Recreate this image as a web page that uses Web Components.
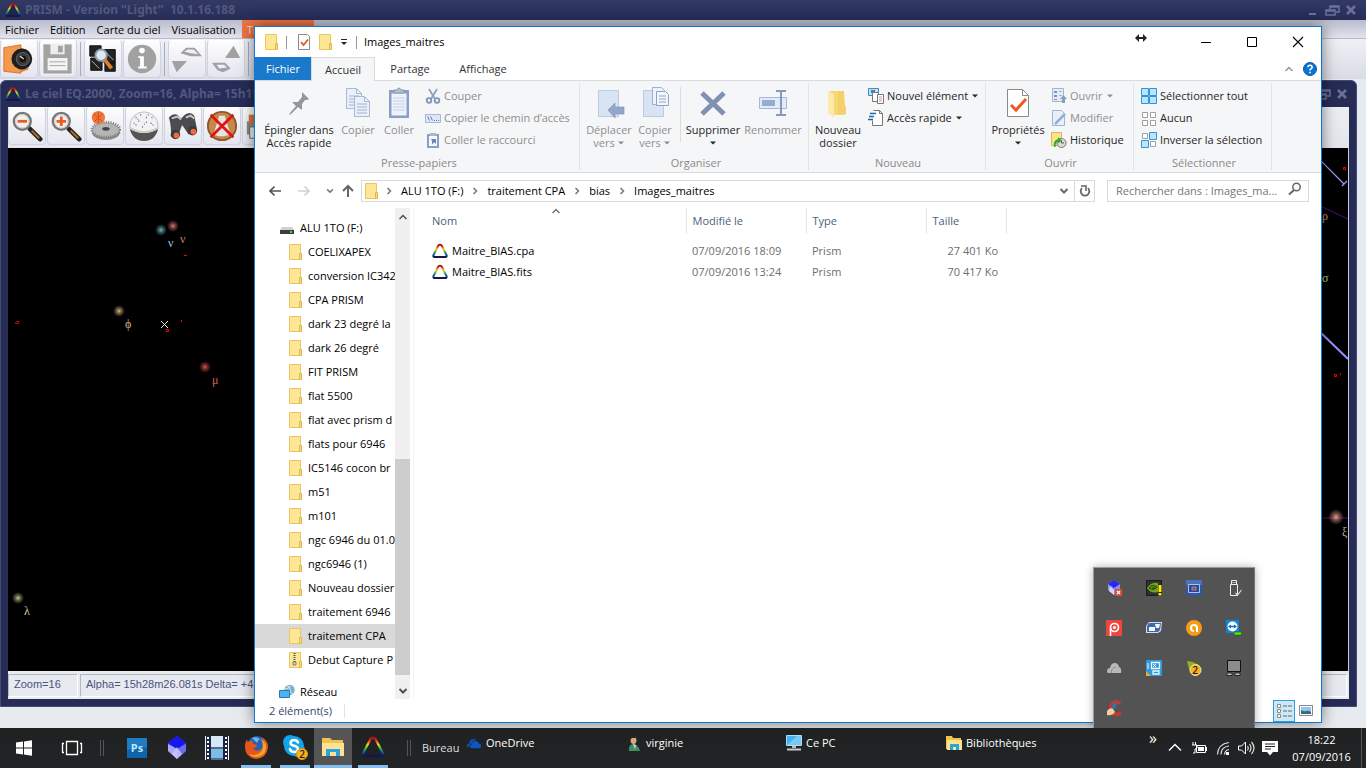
<!DOCTYPE html>
<html lang="fr">
<head>
<meta charset="utf-8">
<title>Images_maitres</title>
<style>
  html, body { margin: 0; height: 100%; }
  body { font: 11px/16px "Open Sans", "Noto Sans", sans-serif; color: #000; overflow: hidden; }
</style>
</head>
<body>
<win-desktop>
  <prism-app slot="back"></prism-app>
  <explorer-window slot="window"></explorer-window>
  <tray-popup slot="popup"></tray-popup>
  <task-bar slot="bar"></task-bar>
</win-desktop>

<script>
const lens = sign => `<path d="M20 20l11 11" stroke="#222" stroke-width="5" stroke-linecap="round"/><path d="M22 22l8 8" stroke="#b5701e" stroke-width="2"/><circle cx="12" cy="12" r="9" fill="#e9eaec" stroke="#777" stroke-width="2.5"/><circle cx="12" cy="12" r="7" fill="#f1f1f4" stroke="#ccc"/><path d="${sign}" stroke="#f05a1a" stroke-width="3"/>`;
const folderBody = `<path d="M1.500.500h11v15h-11z" fill="#fde696" stroke="#e9c75c"/><path d="M11.500 9.500h2v6h-2z" fill="#fbdc7c" stroke="#e0b945"/>`;
const prism = (hollow, w) => `<defs><linearGradient id="p" x1="0" y1="0" x2="0" y2="1"><stop offset="0" stop-color="#8c1c1c"/><stop offset=".15" stop-color="#e0301c"/><stop offset=".38" stop-color="#f2d21c"/><stop offset=".6" stop-color="#25b545"/><stop offset=".8" stop-color="#1d4fb0"/><stop offset="1" stop-color="#15153f"/></linearGradient></defs><path d="M6.500 2.300q1.500-1 3 0l5 9.700q.6 2-1.200 2h-10.600q-1.800 0-1.200-2z" fill="${hollow}" stroke="url(#p)" stroke-width="${w}" stroke-linejoin="round"/><path d="M2.500 14h11" stroke="#16164a" stroke-width="${w}" stroke-linecap="round"/>`;
const sq = (x, y, on) => `<path d="M${x}.5 ${y}.5h5v5h-5z" fill="${on ? '#bfe3fb' : '#fff'}" stroke="${on ? '#2e94e0' : '#a0a0a0'}" stroke-width="${on ? 1.5 : 1}"/>`;
const tile = (x, y) => `<path d="M${x}.5 ${y}.5h7v7h-7z" fill="#bfe3fb" stroke="#2e94e0"/>`;
const sheet = (x, y) => `<path d="M${x}.5 ${y}.5h10l5 5v15h-15z" fill="#eaf0f9" stroke="#a9b9d3"/><path d="M${x + 10}.5 ${y}.5v5h5" fill="none" stroke="#a9b9d3"/><path d="M${x + 3} ${y + 8}h10m-10 3h10m-10 3h10m-10 3h10" stroke="#9fb2d2"/>`;
const glyph = {
  folder: [16, 16, folderBody],
  zip: [16, 16, folderBody + `<path d="M6.500 1v10" stroke="#555" stroke-width="2" stroke-dasharray="1 1"/><path d="M5 10h3v3H5z" fill="#ddd" stroke="#666" stroke-width=".8"/>`],
  prismLight: [16, 16, prism('#fff', 2)],
  prismDark: [16, 16, prism('#1f2550', 1.8)],
  prismBar: [16, 16, prism('#1f2122', 1.6)],
  drive: [16, 16, `<path d="M3 7h10l2 3H1z" fill="#cfcfcf"/><path d="M1 10h14v4H1z" fill="#3d3d3d"/><path d="M11 12h2" stroke="#3cdc50" stroke-width="2"/>`],
  network: [16, 16, `<circle cx="10.500" cy="6" r="5.200" fill="#7eb0cc"/><path d="M8 2q4 1 3 4t3 4M6 5q4 0 5-3" stroke="#d8ecf4" fill="none"/><path d="M.5 6.500h10v7H.5z" fill="#4db3ee" stroke="#2a78b4"/><path d="M3 15.500h6" stroke="#7c8a94"/>`],
  props: [16, 16, `<path d="M2.500.5h9l2 2v13h-11z" fill="#fff" stroke="#8b8b8b"/><path d="M5 8l2.500 3L12 5.500" fill="none" stroke="#e2581e" stroke-width="1.800"/>`],
  qatArrow: [8, 8, `<path d="M1 1.500h6" stroke="#222"/><path d="M1 4h6L4 7z" fill="#222"/>`],
  caret: [8, 8, `<path d="M1 2.500h6l-3 3z" fill="currentColor"/>`],
  resize: [12, 8, `<path d="M2 4h8" stroke="#222" stroke-width="2"/><path d="M4 0v8L0 4zM8 0v8l4-4z" fill="#222"/>`],
  min: [16, 16, `<path d="M3 8.500h10" stroke="#000"/>`],
  max: [16, 16, `<path d="M3.500 3.500h9v9h-9z" fill="none" stroke="#000"/>`],
  close: [16, 16, `<path d="M3 3l10 10M13 3L3 13" stroke="#000" stroke-width="1.100"/>`],
  chevUp: [10, 10, `<path d="M1.500 7L5 3.500 8.500 7" fill="none" stroke="currentColor" stroke-width="1.500"/>`],
  chevDown: [10, 10, `<path d="M1.500 3L5 6.500 8.500 3" fill="none" stroke="currentColor" stroke-width="2"/>`],
  chevRight: [8, 8, `<path d="M2.500 1l3 3-3 3" fill="none" stroke="#777" stroke-width="1.500"/>`],
  back: [14, 14, `<path d="M13 7H2M6.500 2.500L2 7l4.500 4.500" fill="none" stroke="#555" stroke-width="1.700"/>`],
  fwd: [14, 14, `<path d="M1 7h11M7.500 2.500L12 7l-4.500 4.500" fill="none" stroke="#d2d2d2" stroke-width="1.700"/>`],
  up: [14, 14, `<path d="M7 13V2M2 7l5-5 5 5" fill="none" stroke="#666" stroke-width="2"/>`],
  refresh: [14, 14, `<path d="M4 4.200A4.300 4.300 0 1 0 10 4.200" fill="none" stroke="#666" stroke-width="1.800"/><path d="M3 2h5v5" fill="none" stroke="#666" stroke-width="1.600"/>`],
  search: [14, 14, `<circle cx="8.500" cy="5" r="3.700" fill="none" stroke="#666" stroke-width="1.500"/><path d="M6 8l-5 4.500" stroke="#666" stroke-width="2"/>`],
  help: [14, 14, `<circle cx="7" cy="7" r="6.500" fill="#0a74d0" stroke="#0a5ca8"/><path d="M4.800 5.200Q5 3.200 7 3.200t2.200 1.900Q9 6.500 7 7.600v1" fill="none" stroke="#fff" stroke-width="1.500"/><path d="M6.200 9.800h1.600v1.500H6.200z" fill="#fff"/>`],
  pin: [32, 32, `<path d="M19 5l7 7-2 1-2 0-3 4 0 6-4-3-7 7-2 1 1-2 6-7-4-4 6 0 4-5z" fill="#8f979f"/>`],
  copy: [32, 32, sheet(4, 1) + sheet(12, 9)],
  paste: [32, 32, `<path d="M6 3h20v28H6z" fill="#8a9fc5"/><path d="M8.500 6.500h15v22h-15z" fill="#eef3fb"/><path d="M10 11h12m-12 3h12m-12 3h12m-12 3h12m-12 3h12" stroke="#c3cfe3"/><path d="M11 3h3q2-4 4 0h3v3H11z" fill="#b3bfd3" stroke="#8496b8"/>`],
  cut: [16, 16, `<path d="M4 1l6 10M12 1L6 11" stroke="#8fa0c2" stroke-width="1.800"/><circle cx="4" cy="12.500" r="2.300" fill="none" stroke="#8193ba" stroke-width="1.800"/><circle cx="12" cy="12.500" r="2.300" fill="none" stroke="#8193ba" stroke-width="1.800"/>`],
  path: [16, 16, `<path d="M.5 4.500h15v8H.5z" fill="#dde7f5" stroke="#a8b9d6"/><path d="M2.500 6.500l2 4M5.500 6.500l2 4M9 10.500h1m1 0h1m1 0h1" stroke="#6b7fa8"/>`],
  shortcut: [16, 16, `<path d="M2 2h12v14H2z" fill="#8a9fc5"/><path d="M4 4h8v10H4z" fill="#f4f7fc"/><path d="M5 1h6v3H5z" fill="#a9b7d0"/><path d="M6 7h5v5l-1.800-1.800-2.200 2.300V9z" fill="#6f84b0"/>`],
  moveTo: [32, 32, `<path d="M5.500 3.500h20v26h-20z" fill="#d8e3f3" stroke="#bccbe2"/><path d="M15 23l7-7v4h9v7h-9v4z" fill="#94a6ca" stroke="#8497be" stroke-width=".7"/>`],
  copyTo: [32, 32, `<path d="M4.500 3.500h20v26h-20z" fill="#d8e3f3" stroke="#bccbe2"/><path d="M13.500.5h9l3 3v14h-12z" fill="#eef3fb" stroke="#9fb0cd"/><path d="M17.500 4.500h9l3 3v11h-12z" fill="#f3f6fc" stroke="#8fa2c4"/><path d="M20 9h7m-7 3h7m-7 3h7" stroke="#8fa2c4"/>`],
  del: [32, 32, `<path d="M5 6l22 21M27 6L5 27" stroke="#8091b3" stroke-width="5"/>`],
  rename: [32, 32, `<path d="M2.500 10.500h27v11h-27z" fill="#e2ecf9" stroke="#a5b8d8"/><path d="M5 13h13v6H5z" fill="#98acd0"/><path d="M19 4h4l1 1 1-1h4M24 4v24M19 28h4l1-1 1 1h4" stroke="#8798bb" stroke-width="2" fill="none"/>`],
  bigFolder: [32, 32, `<path d="M8 4h14l1 14v10H11z" fill="#f9d775"/><path d="M16 4h6v13l2 3v7h-8z" fill="#f5cf69"/><path d="M6 4l6 3v24l-6-5z" fill="#fde9a8"/>`],
  newItem: [16, 16, `<path d="M.5.500h10v7H.5z" fill="#bfe0f5" stroke="#3c8dc0"/><path d="M3 2h4v3H3z" fill="#56789c"/><path d="M4.500 4.500h6v9h-6z" fill="#fff" stroke="#777"/><path d="M9.500 6.500h6v9h-6z" fill="#fff" stroke="#777"/><path d="M11 9h3m-3 2h3m-3 2h3" stroke="#c99"/>`],
  easy: [16, 16, `<path d="M5.500.5h6l3 3v12h-10v-5" fill="#fff" stroke="#777"/><path d="M11.500.500v3h3" fill="none" stroke="#777"/><path d="M2 3.500h6M1 6.500h5M0 9.500h5" stroke="#1c68a8" stroke-width="1.500"/>`],
  bigProps: [32, 32, `<path d="M5.500 2.500h15l6 6v21h-21z" fill="#fff" stroke="#8a8a8a"/><path d="M20.500 2.500v6h6" fill="none" stroke="#8a8a8a"/><path d="M9 18l5 5 10-11" fill="none" stroke="#ee5a1c" stroke-width="3"/>`],
  open: [16, 16, `<path d="M1.500.5h11v13h-11z" fill="#e4ecf8" stroke="#a3b4d2"/><path d="M3 3h3v2H3zm0 4h3v2H3zm0 4h3v1H3z" fill="#7f92b8"/><path d="M8 3.500h3m-3 4h3" stroke="#9fb2d2"/><path d="M11 15V11H9l3.500-4L16 11h-2v4z" fill="#8a9cc0"/>`],
  edit: [16, 16, `<path d="M1.500.5h9l3 3v12h-12z" fill="#e8effa" stroke="#a3b4d2"/><path d="M4 14L14 4" stroke="#9aaed2" stroke-width="2.500"/>`],
  history: [16, 16, `<path d="M.5.500h10v13H.5z" fill="#fde28a" stroke="#dcb84c"/><circle cx="10.500" cy="11" r="4.500" fill="#dcdcdc" stroke="#777"/><path d="M10.500 8.500V11h2.500" fill="none" stroke="#555"/><path d="M3 15q-1-7 4-8V5l4 3.500-4 3v-2q-3 1-2 5z" fill="#2cae34"/>`],
  selAll: [16, 16, tile(0, 0) + tile(8, 0) + tile(0, 8) + tile(8, 8)],
  selNone: [16, 16, sq(1, 2, 0) + sq(9, 2, 0) + sq(1, 10, 0) + sq(9, 10, 0)],
  selInv: [16, 16, sq(1, 1, 0) + tile(8, 0) + tile(0, 8) + sq(9, 9, 0)],
  viewList: [18, 16, `<path d="M2.500 1.500h3v3h-3zm0 5h3v3h-3zm0 5h3v3h-3z" fill="#fff" stroke="#888"/><path d="M8 3h4m1 0h4M8 8h4m1 0h4M8 13h4m1 0h4" stroke="#666"/>`],
  viewBig: [16, 16, `<path d="M1.500 2.500h13v10h-13z" fill="#fff" stroke="#888"/><path d="M3 4h10v7H3z" fill="#8ec6ee"/><path d="M3 11V7q3 2 5 1t5 1v2z" fill="#356a80"/>`],

  camera: [38, 36, `<path d="M3 6l18-3v30L3 31z" fill="#f59a4c" stroke="#d9702a"/><path d="M21 6l8 3v20l-8 3z" fill="#e0843c"/><circle cx="22" cy="18" r="11" fill="#1e1e20"/><circle cx="23" cy="18" r="7" fill="#3b3b40" stroke="#666"/><circle cx="23" cy="18" r="3.500" fill="#111"/><path d="M20 15l4 3" stroke="#e8d890" stroke-width="1.500"/>`],
  disk: [38, 36, `<path d="M3 2h31v32H3z" fill="#a3a3a3" stroke="#fff"/><path d="M11 2h15v11H11z" fill="#eee"/><path d="M19 4h5v7h-5z" fill="#a3a3a3"/><path d="M8 17h21v13H8z" fill="#f4f4f6"/><path d="M10 21h17m-17 4h17" stroke="#a3a3a3"/>`],
  photos: [38, 36, `<path d="M5 4h12v11H5zM20 8h12v14H20zM6 17h12v13H6zM21 22h11v9H21z" fill="#222" stroke="#111"/><path d="M7 20l8 8M22 11l8 8" stroke="#bbb"/><circle cx="17" cy="14" r="6" fill="#dbe9f3" stroke="#8f9ba6" stroke-width="2"/><path d="M21 19l7 9" stroke="#e27d2c" stroke-width="4"/>`],
  info: [38, 36, `<circle cx="19" cy="18" r="15" fill="#a1a1a1"/><circle cx="19" cy="9" r="3" fill="#fff"/><path d="M15 15h6v11h3v2h-9v-2h2v-9h-2z" fill="#fff"/>`],
  swapA: [38, 36, `<path d="M3 20h16L8 32zM12 12l6-6h9l8 9-12 0z" fill="#a1a1a1"/><path d="M16 10l4-2 6 0 5 5-8-1z" fill="#eef"/>`],
  swapB: [38, 36, `<path d="M18 17h16L27 4zM4 22h14l6 6-8 4-6-2z" fill="#a1a1a1"/><path d="M9 24h8l3 3-8 1z" fill="#eef"/>`],
  zoomOut: [34, 34, lens('M7 12h10')],
  zoomIn: [34, 34, lens('M7 12h10M12 7v10')],
  dome: [34, 34, `<ellipse cx="18" cy="23" rx="15" ry="9" fill="#8f8f8f"/><ellipse cx="18" cy="21" rx="15" ry="8" fill="#b5b5b5" stroke="#777" stroke-dasharray="1 1.500" stroke-width="3"/><ellipse cx="18" cy="20" rx="4" ry="2" fill="#444"/><circle cx="10" cy="8" r="7" fill="#f0763a"/><path d="M5 4l9 8M6 12l8-8M10 2v12" stroke="#c9501c"/>`],
  globe: [34, 34, `<circle cx="17" cy="17" r="15" fill="#f2f2f2" stroke="#bbb"/><path d="M2 20q15 9 30 0-3 13-15 13T2 20z" fill="#555"/><path d="M2 19q15 9 30 0" stroke="#ccc" fill="none" stroke-width="2"/><path d="M8 8h1m4-3h1m5 3h1m5 0h1m-15 4h1m7 1h1m-12 3h1m6 2h1m8-4h1m-6-6h1" stroke="#6a55b8" stroke-width="1.500"/><path d="M10 10h1m10-5h1m-5 10h1m8 1h1M6 14h1" stroke="#4a4" stroke-width="1.500"/>`],
  binoc: [34, 34, `<path d="M2 8q4-5 9-3l4 4 4-4q6-4 10 1l3 15-9 5-7-10-5 14-7-2q1-10-2-20z" fill="#4a4c50"/><path d="M5 9l6-2 4 3M20 8l5-2 4 3" stroke="#c9c9cc" stroke-width="2" fill="none"/><ellipse cx="9" cy="26" rx="5" ry="5" fill="#3a3a3c"/><ellipse cx="10" cy="27" rx="3" ry="3" fill="#f0693a"/><ellipse cx="27" cy="22" rx="5" ry="5" fill="#3a3a3c"/><ellipse cx="28" cy="23" rx="3" ry="3" fill="#f0693a"/>`],
  noScope: [34, 34, `<circle cx="17" cy="17" r="15" fill="#c8874a" stroke="#8a5a2c" stroke-width="2"/><path d="M14 6h6l6 20-7 2h-6l-5-2z" fill="#e7e3e0"/><path d="M5 5l24 24M29 5L5 29" stroke="#df1414" stroke-width="3"/>`],
  print: [34, 34, `<path d="M2 12h28v14H2z" fill="#888"/><path d="M4 5h12v9H4z" fill="#d77738"/><path d="M5 18h10v12H5z" fill="#eee" stroke="#666"/>`],

  start: [18, 18, `<path d="M1 3.500l7-1v6H1zM9 2.400l8-1.200v7.300H9zM1 9.500h7v6l-7-1zM9 9.500h8v7.300l-8-1.200z" fill="#fff"/>`],
  taskview: [22, 18, `<path d="M5.500 2.500h11v13h-11z" fill="none" stroke="#fff" stroke-width="1.300"/><path d="M3 4.500H1.500v9H3M19 4.500h1.500v9H19" fill="none" stroke="#fff" stroke-width="1.300"/>`],
  ps: [24, 24, `<path d="M2 2h20v20H2z" fill="#0f63a8"/><path d="M2 2h20v10Q12 8 2 15z" fill="#1d7cc4"/><text x="12" y="16" text-anchor="middle" font-family="Open Sans" font-weight="700" font-size="11" fill="#bfe6ff">Ps</text>`],
  gem: [24, 24, `<path d="M12 0l9 7v8l-9 8-9-8V7z" fill="#4a4ae8"/><path d="M12 0l9 7-9 6-9-6z" fill="#1616f0"/><path d="M3 8l9 5v10l-9-8z" fill="#a9a9f4"/><path d="M21 8l-9 5v10l9-8z" fill="#6e6ee8"/><path d="M12 11l5 7-5 5-5-5z" fill="#c9c9fb" opacity=".8"/>`],
  film: [24, 24, `<path d="M0 0h24v24H0z" fill="#f4f8fc"/><path d="M1 0h5v24H1zM18 0h5v24h-5z" fill="#1b2440"/><path d="M3 1v22M21 1v22" stroke="#fff" stroke-width="2" stroke-dasharray="2 2"/><path d="M6 0h12v11H6z" fill="#d3e9f8"/><path d="M6 13h12v9H6z" fill="#7cbde8"/><path d="M6 12h12M6 23h12" stroke="#24405f" stroke-width="1.500"/>`],
  firefox: [24, 24, `<circle cx="13" cy="11" r="10" fill="#2a5fb4"/><path d="M8 3q4-2 8 1-2 1-3 4z" fill="#69b7ea"/><path d="M3 4q0 2 1 3 3-2 5-1-1 2 1 3l3 1q0 3-4 3 3 4 7 2 4-2 4-6 0-4-3-7 7 3 7 10-1 11-12 12Q1 22 1 12q0-5 2-8z" fill="#e4561a"/><path d="M17 4q6 4 5 10-2 8-10 8-5 0-7-3 9 3 13-4 2-5-1-11z" fill="#f5a423"/>`],
  skype: [26, 26, `<circle cx="8" cy="8" r="7" fill="#12a5e8"/><circle cx="16" cy="16" r="7" fill="#12a5e8"/><circle cx="12" cy="12" r="10" fill="#12a5e8"/><path d="M16 8.500Q15 6 12 6t-3.500 2.800Q8.500 11 12 11.700t4 3Q16 18 12.300 18T8 15" fill="none" stroke="#fff" stroke-width="2.500" stroke-linecap="round"/><circle cx="20" cy="20" r="5.500" fill="#fbb21e" stroke="#e4910a"/><text x="20" y="24" text-anchor="middle" font-family="Open Sans" font-weight="600" font-size="10" fill="#222">2</text>`],
  explorer: [24, 24, `<path d="M1 3h8l2 2h11v16H1z" fill="#f0c34e"/><path d="M1 8h22v13H1z" fill="#fde293"/><path d="M5 21v-7h14v7h-4v-4H9v4z" fill="#27a5e0"/>`],
  onedrive: [20, 16, `<path d="M3 13Q1 13 1 10.500T4 8q0-5 5-6 3 0 4 2-5 0-6 5-3 0-3 4z" fill="#0f4cae"/><path d="M7 14q-2 0-2-2.200T7.500 9Q8 5 12 5q3 0 4 3 3 0 3 3t-3 3z" fill="#0f55c4"/>`],
  user: [16, 16, `<path d="M3 16q-1-6 4-7 5 0 7 7z" fill="#3f8f6e"/><ellipse cx="7.500" cy="5" rx="3" ry="4" fill="#d9a77c"/><path d="M4 5q-1-5 4-5 4 0 3 5l-1-2H6z" fill="#2b2420"/><path d="M7 9l2 5 1-4z" fill="#ddd"/>`],
  pc: [16, 16, `<path d="M.5.500h15v10H.5z" fill="#45b0ee" stroke="#a8dcf8"/><path d="M1 10L11 1h4v9z" fill="#79c9f6"/><path d="M6 11h4v2H6z" fill="#bbb"/><path d="M1 14.500h14" stroke="#ccc" stroke-width="2"/>`],
  lib: [16, 16, `<path d="M0 1h6l1 2h8v11H0z" fill="#efc352"/><path d="M1 5h15v10H1z" fill="#fde28e"/><path d="M4 15V9h9v6h-3v-3H7v3z" fill="#27a5e0"/>`],
  trayUp: [14, 14, `<path d="M1 9.500l6-6 6 6" fill="none" stroke="#fff" stroke-width="1.400"/>`],
  battery: [16, 14, `<path d="M5.500 4.500h9v7h-9z" fill="none" stroke="#fff"/><path d="M7 6h6v4H7zM15 6h1v4h-1z" fill="#fff"/><path d="M2 1v3M4.500 1v3M1 4h5v3l-2 1v4H2" stroke="#fff" fill="none"/>`],
  wifi: [14, 14, `<path d="M1.500 13.500Q2 3 13 1.500M5 13.500Q5 6 13 5M8.500 13.500Q9 9 13 8.500" fill="none" stroke="#ddd" stroke-width="1.200"/><path d="M10 11h3v3h-3z" fill="#fff"/>`],
  sound: [18, 14, `<path d="M1.500 5h3l4-4v12l-4-4h-3z" fill="none" stroke="#fff"/><path d="M10.500 5q1.500 2 0 4.500M12.500 3q3 4 0 8M14.500 1q5 6 0 12" fill="none" stroke="#ddd" stroke-width="1.200"/>`],
  notif: [16, 16, `<path d="M0 1h16v11h-5l-3 3.500L5 12H0z" fill="#fff"/><path d="M3 4h10M3 6.500h10M3 9h6" stroke="#222" stroke-width="1.200"/>`],

  gemX: [16, 16, `<path d="M8 0l6 4v6l-6 5-6-5V4z" fill="#8d8df2"/><path d="M8 0l6 4-6 4-6-4z" fill="#2828ee"/><path d="M4 6l4 4v5l-5-4z" fill="#d4d4fb"/><path d="M9 9h7v7H9z" fill="#e04a34"/><path d="M11 11l3 3m0-3l-3 3" stroke="#fff" stroke-width="1.300"/>`],
  nvidia: [16, 16, `<path d="M0 0h16v16H0z" fill="#2c3233"/><path d="M.5.500h15v15H.5z" stroke="#171c1c"/><path d="M1 8Q5 2 12 3v9Q5 14 1 8z" fill="#6fa516"/><path d="M3 8q3-4 8-1-3 4-8 1zm3 0h3" stroke="#223010" fill="none"/><path d="M12.500 5h3v7h-3zM12.500 13h3v2.500h-3z" fill="#ffe600"/>`],
  intel: [16, 16, `<path d="M0 0h16v16H0z" fill="#4a72bd"/><path d="M0 5h16v11H0z" fill="#3157a4"/><path d="M2.500 4.500h11v8h-11z" fill="#27498e" stroke="#a9c3ee"/><path d="M5.500 6.500h5v4h-5z" fill="#7b8fc0"/><circle cx="8" cy="8.500" r="1.500" fill="#d83c3c"/>`],
  usb: [16, 16, `<path d="M5.500.5h5v4h-5zM4.500 4.500h7v11h-7z" fill="none" stroke="#eee"/><path d="M6.500 2.500h1m1 0h1" stroke="#fff"/><path d="M9.500 13l2 2 4-5" fill="none" stroke="#ddd" stroke-width="1.200"/>`],
  pCircle: [16, 16, `<path d="M0 0h16v16H0z" fill="#f0453c"/><circle cx="8.500" cy="7.500" r="4" fill="none" stroke="#fff" stroke-width="1.700"/><circle cx="8.500" cy="7.500" r="1.600" fill="#fff"/><path d="M4.500 8v8" stroke="#fff" stroke-width="1.600"/>`],
  monitor: [16, 16, `<path d="M3 2h13l-1 9-3 2H0V6z" fill="#d3deee"/><path d="M3 3h12l-1 7-2 2H1V6z" fill="#3f69ad"/><path d="M3 7h6v4H3zM9 4h5l-1 4h-3z" fill="#f4f7fb"/>`],
  avast: [16, 16, `<circle cx="8" cy="8" r="8" fill="#f79a14"/><path d="M11 12V8a3 3 0 1 0-3 3" fill="none" stroke="#fff" stroke-width="2"/>`],
  team: [16, 16, `<path d="M0 0h13v13H0z" fill="#0d86dc"/><circle cx="6.500" cy="6.500" r="5" fill="#fff"/><path d="M2 6.500l3-2v1.200h3V4.500l3 2-3 2V7.300H5v1.200z" fill="#0d6fc0"/><path d="M8 12h7.500v3H8z" fill="#5fe824" stroke="#1d6e0c" stroke-width=".8"/>`],
  cloud: [16, 16, `<path d="M1 12q0-4 3-4 1-5 5-5 3 0 4 4 3 1 2 6H2z" fill="#b9b9b9"/><path d="M5 13q0-5 5-6" stroke="#888" fill="none"/>`],
  touch: [16, 16, `<path d="M0 0h16v16H0z" fill="#2c9bdb"/><path d="M5.500 2.500h8v6h-8zM7 11h6v3H7z" fill="none" stroke="#eaf6fd" stroke-width="1.300"/><path d="M7 4l3 3m0-3l-3 3M2 3v6" stroke="#fff"/><path d="M0 16v-5l5 5z" fill="#f0a92c"/>`],
  green2: [16, 16, `<path d="M1 1l6 1 6 3 1 6-6 2-5-4z" fill="#86b81e"/><circle cx="9.500" cy="10" r="5.500" fill="#fbb01c" stroke="#f7e2b0"/><text x="9" y="14" text-anchor="middle" font-family="Open Sans" font-size="10" font-weight="600" fill="#222">2</text>`],
  pad: [16, 16, `<path d="M1.500.500h13v11h-13z" fill="#8c8c8c" stroke="#111"/><path d="M1 13h5v2.500H1zM9 13h5v2.500H9z" fill="#c4c4c4" stroke="#111" stroke-width=".8"/>`],
  ccleaner: [16, 16, `<path d="M14 4Q11 0 7 3t-1 9q3 4 9 1" fill="none" stroke="#cc3626" stroke-width="3.600"/><path d="M9 0l2 6-4 4-2-1z" fill="#2e74b8"/><path d="M1 11q3-4 6-2l2 3q-3 4-8 3z" fill="#ecd0a4"/>`]
};

/* Base element: renders its template into an open shadow root. */
class Ui extends HTMLElement {
  connectedCallback() {
    if (this.shadowRoot) return;
    this.attachShadow({ mode: 'open' }).innerHTML =
      `<style>:host{display:block;box-sizing:border-box}*{box-sizing:border-box}button{font:inherit;color:inherit;background:none;border:0;padding:0;margin:0}a{color:inherit;text-decoration:none}${this.css || ''}</style>${this.view()}`;
  }
  at(name) { return this.getAttribute(name) || ''; }
}
const icon = (name, size) => `<ui-icon name="${name}"${size ? ` size="${size}"` : ''}></ui-icon>`;

customElements.define('ui-icon', class extends Ui {
  get css() { return `:host{display:inline-block;flex:none;line-height:0}svg{display:block}`; }
  view() {
    const [w, h, body] = glyph[this.at('name')];
    const W = +this.at('size') || w;
    return `<svg width="${W}" height="${Math.round(W * h / w)}" viewBox="0 0 ${w} ${h}" fill="none" aria-hidden="true">${body}</svg>`;
  }
});

customElements.define('win-desktop', class extends Ui {
  get css() { return `:host{display:grid;grid-template-rows:minmax(0,1fr) 40px;height:100vh}
    .area{position:relative;display:grid;overflow:hidden}
    ::slotted([slot=window]){position:absolute;left:254px;top:26px;right:44px;bottom:5px}
    ::slotted([slot=popup]){position:absolute;right:111px;bottom:0}`; }
  view() { return `<main class="area"><slot name="back"></slot><slot name="window"></slot><slot name="popup"></slot></main><slot name="bar"></slot>`; }
});

/* ---------- Prism ---------- */
customElements.define('old-title', class extends Ui {
  get css() { return `:host{display:flex;align-items:center;gap:4px;padding:0 7px 0 5px;color:#51587f;font:bold 12px/16px "Noto Sans",sans-serif;white-space:pre}
    :host([inner]){padding:0;margin:0 -1px 0 -3px}
    .t{flex:1}nav{display:flex;gap:3px}button{width:16px;height:16px}svg{display:block}`; }
  view() { return `${icon('prismDark')}<span class="t"><slot></slot></span><nav>
    <button aria-label="Réduire"><svg width="16" height="16"><path d="M4 12h7" stroke="#6b719a" stroke-width="2"/></svg></button>
    <button aria-label="Restaurer"><svg width="16" height="16" fill="none" stroke="#6b719a" stroke-width="1.500"><path d="M6 7V4h9v6h-3M2 8h9v5H2zM6 5h9M2 9h9"/></svg></button>
    <button aria-label="Fermer"><svg width="16" height="16"><path d="M4 4l8 8M12 4l-8 8" stroke="#6b719a" stroke-width="2.500"/></svg></button></nav>`; }
});
customElements.define('tool-button', class extends Ui {
  get css() { return `:host{display:block;flex:none}button{display:grid;place-items:center;width:38px;height:38px;border-radius:4px;border:1px solid #d0d2df;border-top-color:#fff;background:linear-gradient(#fdfdfe,#e4e5ef)}`; }
  view() { return `<button aria-label="${this.at('label')}">${icon(this.at('icon'), this.at('size'))}</button>`; }
});
customElements.define('prism-app', class extends Ui {
  get css() { return `:host{display:grid;grid-template-rows:20px 19px 40px minmax(0,1fr);min-width:0;background:#e7eaef}
    old-title{background:linear-gradient(#323a63,#262c56)}
    menu{display:flex;gap:1px;margin:0;padding:0;list-style:none;background:linear-gradient(#b9bccd,#e2e3ec);border-bottom:1px solid #b7bac9}
    menu button{padding:1px 5px 0 5px;white-space:nowrap;line-height:17px}
    menu .on{background:#ec7442;color:#f7d9c9;width:72px;text-align:left}
    .tools{display:flex;gap:1px;align-items:center;background:linear-gradient(#eff0f5,#d9dce6)}
    i{width:1px;height:34px;margin:0 2px 0 2px;background:#a7abc2}
    .space{display:grid;padding:1px 9px 22px 0;min-width:0;min-height:0}`; }
  view() {
    const b = (n, l, s = 36) => `<tool-button icon="${n}" label="${l}" size="${s}"></tool-button>`;
    return `<old-title>PRISM - Version "Light"  10.1.16.188</old-title>
    <menu><button>Fichier</button><button>Edition</button><button>Carte du ciel</button><button>Visualisation</button><button class="on">Traitement</button></menu>
    <div class="tools">${b('camera', 'Ouvrir')}${b('disk', 'Enregistrer')}<i></i>${b('photos', 'Images')}${b('info', 'Informations')}<i></i>${b('swapA', 'Importer')}${b('swapB', 'Exporter')}<i></i></div>
    <div class="space"><sky-window></sky-window></div>`;
  }
});
customElements.define('sky-window', class extends Ui {
  get css() { return `:host{display:grid;grid-template-rows:26px 41px minmax(0,1fr) 28px;min-width:0;padding:0 7px 7px 7px;background:#262c56;border:1px solid #424a76;border-radius:6px 6px 0 0}
    .tools{display:flex;gap:1px;align-items:start;background:linear-gradient(#eceef3,#e3e6ec)}
    .sky{display:flex;justify-content:space-between;background:#000;border-right:1px solid #c8cadf;overflow:hidden}
    svg{flex:none}svg text{font:12px "Liberation Serif",serif}
    footer{display:flex;gap:2px;padding:3px 2px 2px 0;background:#e7eaef;color:#4a5180;font:11px/18px "Liberation Sans",sans-serif;white-space:nowrap}
    footer span{padding:0 5px;border:1px solid #b4b8c6;border-right-color:#fff;border-bottom-color:#fff}
    footer span:first-child{width:70px}footer span:last-child{flex:1}`; }
  view() {
    const b = (n, l) => `<tool-button icon="${n}" label="${l}" size="32"></tool-button>`;
    const star = (x, y, c) => `<circle cx="${x}" cy="${y}" r="6" fill="url(#${c})"/>`;
    const grad = (id, c) => `<radialGradient id="${id}"><stop offset="0" stop-color="${c}"/><stop offset=".4" stop-color="${c}" stop-opacity=".5"/><stop offset="1" stop-color="${c}" stop-opacity="0"/></radialGradient>`;
    return `<old-title inner>Le ciel EQ.2000, Zoom=16, Alpha= 15h11</old-title>
    <div class="tools">${b('zoomOut', 'Zoom arrière')}${b('zoomIn', 'Zoom avant')}${b('dome', 'Coupole')}${b('globe', 'Sphère céleste')}${b('binoc', 'Jumelles')}${b('noScope', 'Télescope déconnecté')}${b('print', 'Imprimer')}</div>
    <div class="sky">
      <svg width="246" height="523" viewBox="8 148 246 523"><defs>${grad('c', '#6fb9c6')}${grad('r', '#d77b76')}${grad('y', '#dcb98a')}${grad('m', '#e0524c')}${grad('g', '#c9c98c')}</defs>
        ${star(161, 230, 'c')}${star(173, 226, 'r')}${star(119, 311, 'y')}${star(205, 367, 'm')}${star(18, 598, 'g')}
        <text x="168" y="247" fill="#8ec8e0">ν</text><text x="180" y="243" fill="#c9846c">ν</text><text x="125" y="328" fill="#d0ae7c">ϕ</text><text x="212" y="384" fill="#d8604c">μ</text><text x="24" y="615" fill="#d9c884">λ</text>
        <path d="M161 321l7 7M168 321l-7 7" stroke="#eee"/><path d="M184 255.500h3M181.500 320v2M166.500 329.500h2v2h-2zM15.500 322.500v1h2m-1-2h2v2" stroke="#f00" fill="none"/>
      </svg>
      <svg width="30" height="523" viewBox="1318 148 30 523"><defs>${grad('o', '#f0a090')}</defs>
        <path d="M1318 158l26 26m-2 2l5-5" stroke="#9a9aff" stroke-width="1.200"/><path d="M1318 205l30 14M1318 518h30" stroke="#4b0a8c"/><path d="M1318 330l30 29" stroke="#9090ff" stroke-width="2"/>
        <path d="M1343.500 167.500h2v2h-2zM1334.500 374.500h2v2h-2zM1340.500 373v2" stroke="#f00" fill="none"/><circle cx="1336" cy="517" r="8" fill="url(#o)"/>
        <text x="1322" y="220" fill="#d09070">ρ</text><text x="1322" y="282" fill="#b5c878">σ</text><text x="1342" y="536" fill="#b8b0a8">ξ</text>
      </svg>
    </div>
    <footer><span>Zoom=16</span><span>Alpha= 15h28m26.081s Delta= +411</span></footer>`;
  }
});

/* ---------- Explorer ---------- */
customElements.define('ribbon-big', class extends Ui {
  get css() { return `:host{display:block;flex:none;color:#262626}:host([off]){color:#8e8e8e}
    button{display:flex;flex-direction:column;align-items:center;width:100%;line-height:13px;white-space:nowrap}
    ui-icon[size="32"]{margin-bottom:4px}.l{display:flex;align-items:center;gap:2px;height:13px}`; }
  view() {
    const two = this.at('line2'), arrow = this.hasAttribute('arrow');
    return `<button${this.hasAttribute('off') ? ' disabled' : ''}>${icon(this.at('icon'), 32)}<span>${this.at('label')}</span>${two || arrow ? `<span class="l">${two ? `<span>${two}</span>` : ''}${arrow ? icon('caret') : ''}</span>` : ''}</button>`;
  }
});
customElements.define('ribbon-small', class extends Ui {
  get css() { return `:host{display:block;color:#262626}:host([off]){color:#8e8e8e}
    button{display:flex;align-items:center;gap:3px;height:22px;white-space:nowrap}`; }
  view() { return `<button${this.hasAttribute('off') ? ' disabled' : ''}>${icon(this.at('icon'))}<span>${this.at('label')}</span>${this.hasAttribute('arrow') ? icon('caret') : ''}</button>`; }
});
customElements.define('ribbon-group', class extends Ui {
  get css() { return `:host{display:grid;grid-template-rows:70px 20px;flex:none;padding-top:2px;border-right:1px solid #e2e3e4;margin:2px 0}
    .row{display:flex;padding-top:2px}h2{margin:0;font-weight:400;font-size:11px;line-height:16px;text-align:center;color:#8a8a8a}`; }
  view() { return `<div class="row"><slot></slot></div><h2>${this.at('name')}</h2>`; }
});
customElements.define('explorer-ribbon', class extends Ui {
  get css() { return `:host{display:flex;height:93px;background:#f5f6f7;border-top:1px solid #dadbdc;border-bottom:1px solid #dadbdc}
    .col{padding-left:4px;margin-top:-2px}.near{padding-left:3px}hr{width:1px;height:55px;margin:0 2px 0 4px;border:0;background:#dcdddd}`; }
  view() {
    const B = (w, i, l, x = '') => `<ribbon-big style="width:${w}px" icon="${i}" label="${l}" ${x}></ribbon-big>`;
    const S = (i, l, x = '') => `<ribbon-small icon="${i}" label="${l}" ${x}></ribbon-small>`;
    return `
    <ribbon-group name="Presse-papiers" style="width:325px;padding-left:4px">${B(80, 'pin', 'Épingler dans', 'line2="Accès rapide"')}${B(38, 'copy', 'Copier', 'off')}${B(44, 'paste', 'Coller', 'off')}<div class="col">${S('cut', 'Couper', 'off')}${S('path', 'Copier le chemin d’accès', 'off')}${S('shortcut', 'Coller le raccourci', 'off')}</div></ribbon-group>
    <ribbon-group name="Organiser" style="width:229px;padding-left:4px">${B(50, 'moveTo', 'Déplacer', 'line2="vers" arrow off')}${B(42, 'copyTo', 'Copier', 'line2="vers" arrow off')}<hr>${B(60, 'del', 'Supprimer', 'arrow')}${B(60, 'rename', 'Renommer', 'off')}</ribbon-group>
    <ribbon-group name="Nouveau" style="width:177px;padding-left:2px">${B(54, 'bigFolder', 'Nouveau', 'line2="dossier"')}<div class="col near">${S('newItem', 'Nouvel élément', 'arrow')}${S('easy', 'Accès rapide', 'arrow')}</div></ribbon-group>
    <ribbon-group name="Ouvrir" style="width:148px;padding-left:2px">${B(60, 'bigProps', 'Propriétés', 'arrow')}<div class="col near">${S('open', 'Ouvrir', 'arrow off')}${S('edit', 'Modifier', 'off')}${S('history', 'Historique')}</div></ribbon-group>
    <ribbon-group name="Sélectionner" style="width:138px;padding-left:3px"><div class="col">${S('selAll', 'Sélectionner tout')}${S('selNone', 'Aucun')}${S('selInv', 'Inverser la sélection')}</div></ribbon-group>`;
  }
});
customElements.define('explorer-address', class extends Ui {
  get css() { return `:host{display:flex;align-items:center;height:35px;padding:0 12px 0 12px}
    .nav{display:flex;align-items:center;width:94px}.nav button{display:grid;place-items:center;color:#777;flex:none}
    .bar,.find{display:flex;align-items:center;height:22px;border:1px solid #d9d9d9;background:#fff}
    .bar{flex:1;min-width:0;padding-left:2px}.crumbs{display:flex;align-items:center;flex:1;white-space:nowrap;gap:8px}
    .crumbs ui-icon[name=folder]{margin-right:-3px}
    .drop{width:20px;display:grid;place-items:center;color:#666}.ref{width:20px;height:20px;display:grid;place-items:center;border-left:1px solid #d9d9d9}
    .find{width:202px;margin-left:12px;padding:0 6px 0 8px}
    input{flex:1;min-width:0;border:0;padding:0;outline:0;font:inherit;background:none}input::placeholder{color:#767676;opacity:1}`; }
  view() {
    const c = icon('chevRight');
    return `<div class="nav"><button style="width:15px" aria-label="Précédent">${icon('back')}</button><button style="width:44px" aria-label="Suivant" disabled>${icon('fwd')}</button><button style="width:8px" aria-label="Récents">${icon('chevDown', 8)}</button><button style="width:27px" aria-label="Dossier parent">${icon('up')}</button></div>
    <div class="bar"><nav class="crumbs" aria-label="Adresse">${icon('folder')}${c}<a href="#">ALU 1TO (F:)</a>${c}<a href="#">traitement CPA</a>${c}<a href="#">bias</a>${c}<a href="#">Images_maitres</a></nav><button class="drop" aria-label="Emplacements">${icon('chevDown')}</button><button class="ref" aria-label="Actualiser">${icon('refresh')}</button></div>
    <div class="find"><input type="text" aria-label="Rechercher" placeholder="Rechercher dans : Images_ma..."><button aria-label="Lancer la recherche">${icon('search')}</button></div>`;
  }
});
customElements.define('nav-tree', class extends Ui {
  get css() { return `:host{display:grid;grid-template-columns:minmax(0,1fr) 15px;width:155px;overflow:hidden}
    ul{margin:0;padding:8px 0 0;list-style:none;overflow:hidden}
    li a{display:flex;align-items:center;gap:4px;height:24px;padding-left:33px;white-space:nowrap}
    li.top a{padding-left:24px;gap:5px}li.on{background:#d9d9d9}li.gap{margin-top:8px}
    .sb{display:grid;grid-template-rows:17px 1fr 17px;background:#f0f0f0;color:#505050}.sb button{display:grid;place-items:center}
    .track{display:grid;grid-template-rows:234fr 216fr 7fr}.thumb{grid-row:2;background:#cdcdcd}`; }
  view() {
    const names = ['COELIXAPEX', 'conversion IC342', 'CPA PRISM', 'dark 23 degré la', 'dark 26 degré', 'FIT PRISM', 'flat 5500', 'flat avec prism d', 'flats pour 6946', 'IC5146 cocon br', 'm51', 'm101', 'ngc 6946 du 01.0', 'ngc6946 (1)', 'Nouveau dossier', 'traitement 6946', 'traitement CPA', 'Debut Capture P'];
    const li = (n, i, c = '') => `<li class="${c}"><a href="#">${icon(i)}<span>${n}</span></a></li>`;
    return `<ul>${li('ALU 1TO (F:)', 'drive', 'top')}${names.map((n, k) => li(n, k === 17 ? 'zip' : 'folder', k === 16 ? 'on' : '')).join('')}${li('Réseau', 'network', 'top gap')}</ul>
    <div class="sb"><button aria-label="Défiler vers le haut">${icon('chevUp')}</button><div class="track"><div class="thumb"></div></div><button aria-label="Défiler vers le bas">${icon('chevDown')}</button></div>`;
  }
});
customElements.define('file-table', class extends Ui {
  get css() { return `:host{padding-left:12px;margin-left:3px;border-left:1px solid #f4f4f4}
    table{border-collapse:collapse;table-layout:fixed;width:580px}
    th{position:relative;height:26px;padding:0 6px;text-align:left;font-weight:400;color:#4c607a;border-right:1px solid #e5e5e5}
    th ui-icon{position:absolute;top:-2px;left:50%;margin-left:-5px;color:#777}
    tbody::before{content:"";display:block;height:6px}td{height:21px;padding:0 6px;color:#6d6d6d;white-space:nowrap}td:last-child{text-align:right;padding-right:8px}
    td a{display:flex;align-items:center;gap:4px;color:#000}`; }
  view() {
    const r = (n, d, s) => `<tr><td><a href="#">${icon('prismLight')}<span>${n}</span></a></td><td>${d}</td><td>Prism</td><td>${s}</td></tr>`;
    return `<table><colgroup><col style="width:260px"><col style="width:120px"><col style="width:120px"><col style="width:80px"></colgroup><thead><tr><th>${icon('chevUp')}Nom</th><th>Modifié le</th><th>Type</th><th>Taille</th></tr></thead><tbody>${r('Maitre_BIAS.cpa', '07/09/2016 18:09', '27 401 Ko')}${r('Maitre_BIAS.fits', '07/09/2016 13:24', '70 417 Ko')}</tbody></table>`;
  }
});
customElements.define('explorer-window', class extends Ui {
  get css() { return `:host{display:grid;grid-template-rows:30px 23px auto auto minmax(0,1fr) 23px;background:#fff;border:1px solid #0f78d2;box-shadow:0 0 14px rgba(0,0,0,.5)}
    .title{display:flex;align-items:center;padding-left:9px}.title h1{flex:1;margin:0 0 0 7px;font-size:11px;font-weight:400}
    i{width:1px;height:13px;background:#999}.win{display:flex}.win button{display:grid;place-items:center;width:46px;height:30px}
    .tabs{display:flex;line-height:23px;color:#333}.tabs button{text-align:center}
    .file{width:56px;background:#1979ca}.tabs .file{color:#fff}.tabs .on{width:64px;height:24px;background:#f5f6f7;border:1px solid #dadbdc;border-bottom:0;z-index:1}
    .tabs .end{margin-left:auto;display:flex;align-items:center;gap:9px;padding-right:4px;color:#999}
    .body{display:grid;grid-template-columns:auto minmax(0,1fr);min-height:0}
    footer{display:flex;align-items:center;padding:0 7px 0 14px;color:#33466e}footer i{height:14px;background:#e4e4e4;margin-left:12px}
    .views{margin-left:auto;display:flex;align-items:center;gap:3px}.views button{display:grid;place-items:center}.views .on{width:22px;height:22px;background:#cce8f8;border:1px solid #2e9ddb}`; }
  view() {
    return `<header class="title">${icon('folder')}<i style="margin:0 9px 0 6px"></i>${icon('props')}<span style="display:flex;margin:0 6px">${icon('folder')}</span>${icon('qatArrow')}<i style="margin-left:8px"></i><h1>Images_maitres</h1><span style="margin:-8px 36px 0 0">${icon('resize')}</span>
      <div class="win"><button aria-label="Réduire">${icon('min')}</button><button aria-label="Agrandir">${icon('max')}</button><button aria-label="Fermer">${icon('close')}</button></div></header>
    <nav class="tabs"><button class="file">Fichier</button><button class="on">Accueil</button><button style="width:70px">Partage</button><button style="width:76px">Affichage</button><span class="end">${icon('chevUp')}${icon('help')}</span></nav>
    <explorer-ribbon></explorer-ribbon><explorer-address></explorer-address>
    <div class="body"><nav-tree></nav-tree><file-table></file-table></div>
    <footer><span>2 élément(s)</span><i></i><span class="views"><button class="on" aria-label="Détails">${icon('viewList')}</button><button aria-label="Grandes icônes">${icon('viewBig')}</button></span></footer>`;
  }
});

/* ---------- Shell ---------- */
customElements.define('tray-popup', class extends Ui {
  get css() { return `:host{display:grid;grid-template-columns:repeat(4,40px);grid-auto-rows:40px;background:#535353;border:1px solid #9a9a9a;border-bottom:0;border-right-color:#777;box-shadow:0 0 8px rgba(0,0,0,.3)}button{display:grid;place-items:center}`; }
  view() { return [['gemX', 'Gemme'], ['nvidia', 'NVIDIA'], ['intel', 'Graphiques'], ['usb', 'USB'], ['pCircle', 'Periscope'], ['monitor', 'Écran'], ['avast', 'Avast'], ['team', 'TeamViewer'], ['cloud', 'Nuage'], ['touch', 'Tactile'], ['green2', 'Messages'], ['pad', 'Pavé tactile'], ['ccleaner', 'CCleaner']].map(([i, l]) => `<button aria-label="${l}">${icon(i)}</button>`).join(''); }
});
customElements.define('task-bar', class extends Ui {
  get css() { return `:host{display:flex;background:linear-gradient(#1f2121,#232426);color:#fff;white-space:nowrap;overflow:hidden}
    button{display:grid;place-items:center;height:40px;flex:none}.run{border-bottom:3px solid #83bff0}.on{background:#555}
    .apps{display:flex;padding-left:4px}.first{margin-right:9px}.mid{margin-right:4px}.on{margin-right:6px}
    i{flex:none;align-self:center;width:4px;height:16px;border:solid #555;border-width:0 1px}
    .links{display:flex;flex:1;min-width:0}.links a{display:flex;align-items:center;gap:4px;width:160px;height:30px}
    .tray{display:flex;align-items:center}.more{align-self:start;height:20px;margin-right:6px;font-size:16px}.clock{width:77px;text-align:center;line-height:17px}.peek{width:5px;height:40px;border-left:1px solid #555;margin-left:1px}`; }
  view() {
    const b = (w, i, l, s, c = '') => `<button class="${c}" style="width:${w}px" aria-label="${l}">${icon(i, s)}</button>`;
    const a = (i, l) => `<a href="#">${icon(i, 16)}<span>${l}</span></a>`;
    return `${b(48, 'start', 'Démarrer', 18)}${b(48, 'taskview', 'Vue des tâches', 22)}<i style="margin:0 13px 0 4px"></i>${b(40, 'ps', 'Photoshop', 24)}${b(40, 'gem', 'Gemme', 24)}${b(40, 'film', 'Vidéo', 24)}
    <span class="apps">${b(30, 'firefox', 'Firefox', 24, 'run first')}${b(30, 'skype', 'Skype', 26, 'run mid')}${b(38, 'explorer', 'Explorateur', 24, 'run on')}${b(30, 'prismBar', 'Prism', 24, 'run')}</span>
    <i style="margin:0 11px 0 19px"></i><span style="align-self:center;color:#ddd;width:44px">Bureau</span>
    <nav class="links">${a('onedrive', 'OneDrive')}${a('user', 'virginie')}${a('pc', 'Ce PC')}${a('lib', 'Bibliothèques')}</nav>
    <div class="tray"><button class="more" aria-label="Autres">»</button>${b(24, 'trayUp', 'Icônes cachées', 14)}${b(24, 'battery', 'Batterie', 16)}${b(24, 'wifi', 'Wi-Fi', 14)}${b(22, 'sound', 'Volume', 18)}${b(26, 'notif', 'Notifications', 16)}
    <time class="clock">18:22<br>07/09/2016</time><span class="peek"></span></div>`;
  }
});
</script>
</body>
</html>
